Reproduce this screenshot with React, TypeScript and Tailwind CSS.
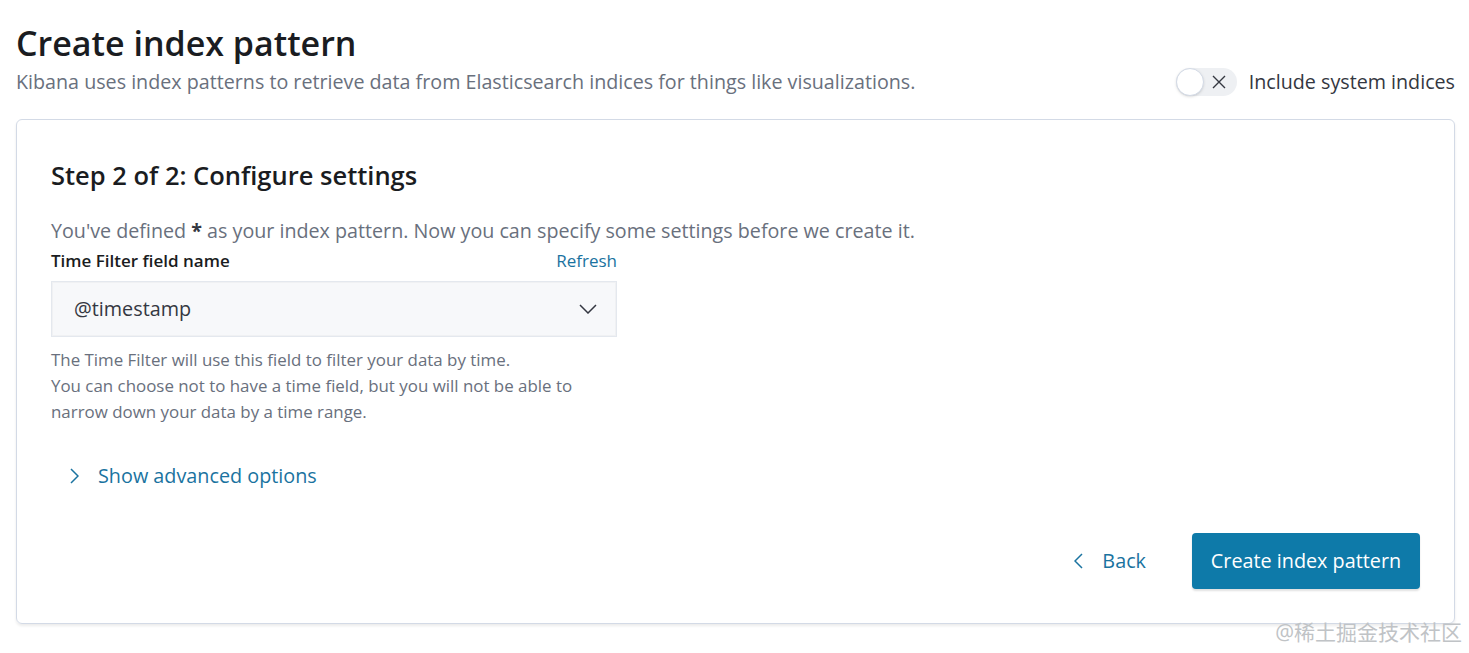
const font = { fontFamily: '"Open Sans", "Noto Sans", "Noto Sans CJK SC", sans-serif' };

const Chevron = ({ dir, className }: { dir: 'left' | 'right'; className?: string }) => (
  <svg className={className} width="10" height="16" viewBox="0 0 10 16" fill="none" stroke="currentColor" strokeWidth={1.5}>
    <path d={dir === 'right' ? 'M2 1l7 7-7 7' : 'M8 1L1 8l7 7'} />
  </svg>
);

export default function App() {
  return (
    <div className="relative w-[1469px] h-[653px] bg-white text-[#343741]" style={font}>
      <div className="px-4 pt-[21px]">
        {/* 헤더 */}
        <h1 className="text-[34px] leading-[44px] font-semibold text-[#1a1c21]">
          Create index pattern
        </h1>
        <div className="h-[34px] flex items-center justify-between">
          <p className="text-[19.7px] leading-[28px] text-[#69707d]">
            Kibana uses index patterns to retrieve data from Elasticsearch indices for things like visualizations.
          </p>
          <div className="flex items-center gap-3 mr-[-2px]">
            <div className="relative w-[61px] h-[28px] rounded-full bg-[#eef0f3]">
              <div className="absolute left-0 top-0 w-[28px] h-[28px] rounded-full bg-white border border-[#d3dae6] shadow-sm" />
              <svg className="absolute right-[11px] top-[7px]" width="14" height="14" viewBox="0 0 14 14" stroke="#343741" strokeWidth={1.4}>
                <path d="M1 1l12 12M13 1L1 13" />
              </svg>
            </div>
            <span className="text-[19.7px] text-[#343741]">Include system indices</span>
          </div>
        </div>

        {/* 패널 */}
        <div className="mt-[20px] w-[1439px] h-[505px] rounded-md border border-[#d3dae6] shadow-[0_2px_3px_rgba(0,0,0,0.08)] px-[34px] pt-[39px]">
          <h2 className="text-[25.5px] leading-[32px] font-semibold text-[#1a1c21]">
            Step 2 of 2: Configure settings
          </h2>
          <p className="mt-[26px] text-[19.7px] leading-[28px] text-[#69707d]">
            You've defined <strong className="font-bold text-[#343741]">*</strong> as your index pattern. Now you can specify some settings before we create it.
          </p>
          <div className="w-[566px]">
            <div className="flex items-center justify-between mt-[4px]">
              <span className="text-[17px] leading-[24px] font-semibold text-[#1a1c21]">Time Filter field name</span>
              <span className="text-[17px] leading-[24px] text-[#1a73a0]">Refresh</span>
            </div>
            <div className="mt-[8px] h-[56px] flex items-center justify-between pl-[22px] pr-[19px] bg-[#f7f8fa] border border-[#e4e8ee] shadow-[inset_0_0_0_1px_rgba(16,22,26,0.03)]">
              <span className="text-[19.8px] text-[#343741]">@timestamp</span>
              <svg width="18" height="10" viewBox="0 0 18 10" fill="none" stroke="#343741" strokeWidth={1.5}>
                <path d="M1 1l8 8 8-8" />
              </svg>
            </div>
            <div className="mt-[10px] text-[16.9px] leading-[26px] text-[#69707d]">
              <div>The Time Filter will use this field to filter your data by time.</div>
              <div>You can choose not to have a time field, but you will not be able to</div>
              <div>narrow down your data by a time range.</div>
            </div>
          </div>

          <div className="mt-[37px] h-[28px] ml-[18px] flex items-center gap-[19px] text-[#1a73a0]">
            <Chevron dir="right" />
            <span className="text-[19.8px]">Show advanced options</span>
          </div>

          <div className="flex items-center justify-end gap-[46px] mt-[43px]">
            <div className="flex items-center gap-[18px] text-[#1a73a0]">
              <Chevron dir="left" />
              <span className="text-[19.8px]">Back</span>
            </div>
            <button className="h-[56px] w-[228px] rounded bg-[#0e7aa9] text-white text-[19.8px] shadow-[0_2px_2px_rgba(0,0,0,0.12)]">
              Create index pattern
            </button>
          </div>
        </div>
      </div>

      {/* 워터마크 */}
      <div className="absolute right-[7px] bottom-[5px] text-[21px] text-[#c0c3c6]">@稀土掘金技术社区</div>
    </div>
  );
}
